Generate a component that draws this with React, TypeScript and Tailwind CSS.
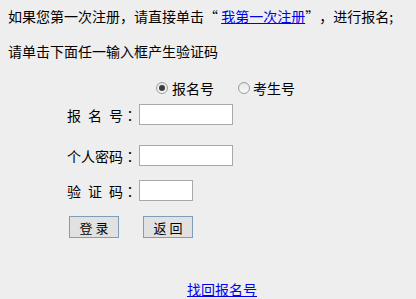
import React from "react";

const font = "font-['Noto_Sans_CJK_SC','Noto_Sans',sans-serif]";
// TC places ，and ： in the middle of the cell, as the reference does
const punct = "font-['Noto_Sans_CJK_TC',sans-serif]";

// label like "报 名 号：" — each char sits in a 14px cell, each space is 7px
const Label = ({ text }: { text: string }) => (
  <div className="flex w-[70px] shrink-0 items-center">
    {text.split("").map((c, i) =>
      c === " " ? (
        <span key={i} className="inline-block w-[7px]" />
      ) : (
        <span key={i} className={`inline-block w-[14px] text-center ${c === "：" ? punct : ""}`}>
          {c}
        </span>
      )
    )}
  </div>
);

const Radio = ({ checked }: { checked?: boolean }) => (
  <span className="flex h-[12px] w-[12px] items-center justify-center rounded-full border border-[#9a9a9a] bg-gradient-to-b from-[#e6e6e6] to-[#fafafa]">
    {checked && <span className="h-[6px] w-[6px] rounded-full bg-[#3c3c3c]" />}
  </span>
);

const Button = ({ text }: { text: string }) => (
  <button className="flex h-[22px] w-[50px] items-center justify-center gap-[3px] border border-[#7f9db9] bg-[#e1e1e1] text-[13px] leading-none text-black">
    {text.split("").map((c, i) => (
      <span key={i}>{c}</span>
    ))}
  </button>
);

export default function App() {
  const [mode, setMode] = React.useState("bmh");
  return (
    <div
      lang="zh-CN"
      className={`${font} h-[299px] w-[416px] overflow-hidden bg-[#eeeeee] text-[14px] leading-[20px] text-black`}
    >
      <p className="whitespace-nowrap pl-[8px] pt-[6px]">
        如果您第一次注册<span className={punct}>，</span>请直接单击
        <span className="inline-block w-[14px] text-right">“</span>{" "}
        <a href="#" className="text-[#0000ee] underline">
          我第一次注册
        </a>
        <span className="inline-block w-[14px] text-left">”</span>
        <span className={punct}>，</span>进行报名;
      </p>
      <p className="mt-[15px] pl-[8px]">请单击下面任一输入框产生验证码</p>

      <div className="mt-[17px] flex h-[20px] items-center pl-[156px]">
        <label className="flex items-center gap-[4px]" onClick={() => setMode("bmh")}>
          <Radio checked={mode === "bmh"} />
          <span>报名号</span>
        </label>
        <label className="ml-[24px] flex items-center gap-[3px]" onClick={() => setMode("ksh")}>
          <Radio checked={mode === "ksh"} />
          <span>考生号</span>
        </label>
      </div>

      <div className="mt-[6px] flex h-[21px] items-center pl-[67px]">
        <Label text="报 名 号：" />
        <input className="ml-[2px] h-[21px] w-[94px] border border-[#a9a9a9] bg-white outline-none" />
      </div>
      <div className="mt-[20px] flex h-[21px] items-center pl-[67px]">
        <Label text="个人密码：" />
        <input
          type="password"
          className="ml-[2px] h-[21px] w-[94px] border border-[#a9a9a9] bg-white outline-none"
        />
      </div>
      <div className="mt-[14px] flex h-[21px] items-center pl-[67px]">
        <Label text="验 证 码：" />
        <input className="ml-[2px] h-[21px] w-[54px] border border-[#a9a9a9] bg-white outline-none" />
      </div>

      <div className="mt-[15px] flex gap-[24px] pl-[69px]">
        <Button text="登录" />
        <Button text="返回" />
      </div>

      <div className="mt-[41px] pl-[187px]">
        <a href="#" className="text-[#0000ee] underline">
          找回报名号
        </a>
      </div>
    </div>
  );
}
